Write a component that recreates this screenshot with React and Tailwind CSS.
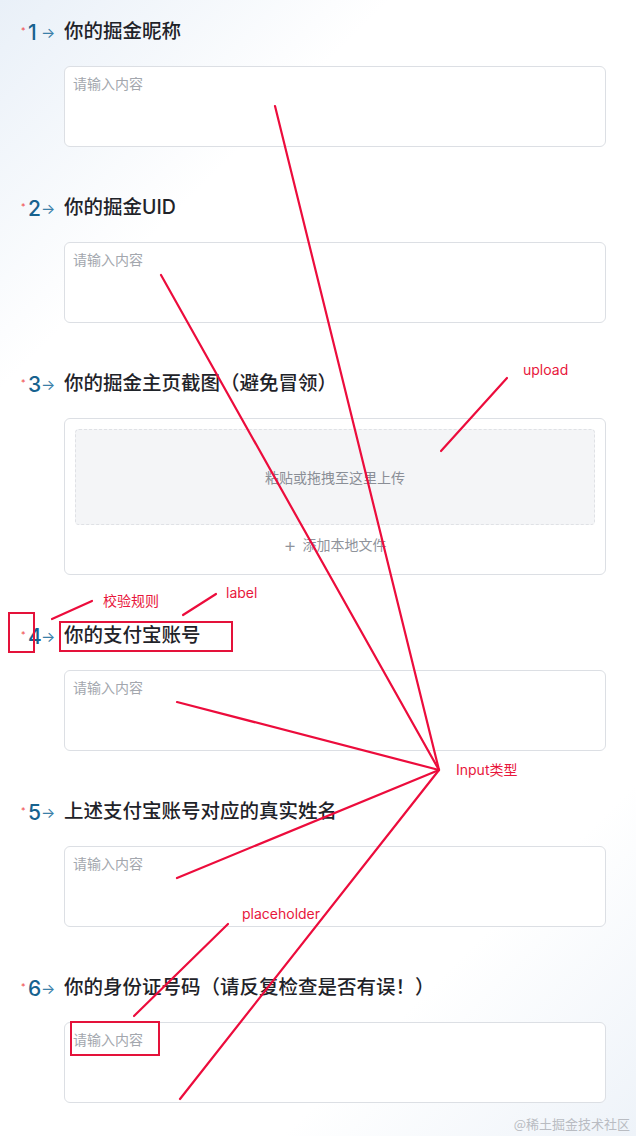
const FONT = "font-['Inter','Noto_Sans_CJK_SC',sans-serif]";

const questions = [
  { no: 1, label: "你的掘金昵称", type: "input" },
  { no: 2, label: "你的掘金UID", type: "input" },
  { no: 3, label: "你的掘金主页截图（避免冒领）", type: "upload" },
  { no: 4, label: "你的支付宝账号", type: "input" },
  { no: 5, label: "上述支付宝账号对应的真实姓名", type: "input" },
  { no: 6, label: "你的身份证号码（请反复检查是否有误！）", type: "input" },
];

function Question({ no, label, type }) {
  return (
    <div className="flex flex-col">
      {/* Label row */}
      <div className="flex items-center h-[28px] pl-[21px]">
        <span className="text-[#f04a4a] text-[9px] leading-none w-[7px] -mt-[3px]">*</span>
        <span className="text-[#17628f] text-[21px] font-medium leading-none w-[13px]">{no}</span>
        <span className="text-[#3a7fa8] text-[15px] leading-none w-[23px]">→</span>
        <span className="text-[#1f2329] text-[19.5px] font-medium leading-none">{label}</span>
      </div>

      {/* Field */}
      <div className="ml-[64px] mr-[30px] mt-[20px]">
        {type === "input" ? (
          <div className="h-[81px] border border-[#dcdfe4] rounded-[6px] bg-white px-[8px] pt-[4px]">
            <span className="text-[14px] text-[#a3a7ae]">请输入内容</span>
          </div>
        ) : (
          <div className="h-[157px] border border-[#dcdfe4] rounded-[6px] bg-white p-[10px] flex flex-col">
            <div className="h-[96px] rounded-[4px] border border-dashed border-[#dfe1e5] bg-[#f4f5f7] flex items-center justify-center">
              <span className="text-[14px] text-[#8a8e96]">粘贴或拖拽至这里上传</span>
            </div>
            <div className="flex-1 flex items-center justify-center gap-[6px] text-[14px] text-[#8f939b]">
              <span className="text-[20px] leading-none font-light">+</span>
              <span>添加本地文件</span>
            </div>
          </div>
        )}
      </div>
    </div>
  );
}

function Annotations() {
  const lines = [
    [275, 106, 439, 770],
    [161, 275, 439, 770],
    [177, 702, 439, 770],
    [177, 878, 439, 770],
    [180, 1099, 439, 770],
    [507, 378, 441, 451],
    [52, 619, 92, 601],
    [183, 615, 216, 594],
    [228, 924, 134, 1016],
  ];
  const rects = [
    [9, 613, 25, 39],
    [60, 622, 172, 29],
    [71, 1022, 88, 33],
  ];
  const notes = [
    { text: "upload", x: 523, y: 370 },
    { text: "校验规则", x: 103, y: 601 },
    { text: "label", x: 226, y: 593 },
    { text: "Input类型", x: 456, y: 770 },
    { text: "placeholder", x: 242, y: 914 },
  ];
  return (
    <>
      <svg className="absolute inset-0 pointer-events-none" width="636" height="1136">
        {lines.map(([x1, y1, x2, y2], i) => (
          <line key={i} x1={x1} y1={y1} x2={x2} y2={y2} stroke="#ec0c3c" strokeWidth="2.2" strokeLinecap="round" />
        ))}
        {rects.map(([x, y, w, h], i) => (
          <rect key={i} x={x} y={y} width={w} height={h} fill="none" stroke="#e4123a" strokeWidth="2" />
        ))}
      </svg>
      {notes.map((n) => (
        <span
          key={n.text}
          className="absolute text-[14px] leading-[16px] text-[#e8173c] whitespace-nowrap"
          style={{ left: n.x, top: n.y - 8 }}
        >
          {n.text}
        </span>
      ))}
    </>
  );
}

export default function App() {
  return (
    <div
      className={`relative w-[636px] h-[1136px] overflow-hidden bg-[linear-gradient(135deg,#e9f0f8_0%,#ffffff_22%,#ffffff_80%,#eef3f9_100%)] ${FONT}`}
    >
      <div className="flex flex-col gap-[47px] pt-[18px]">
        {questions.map((q) => (
          <Question key={q.no} {...q} />
        ))}
      </div>

      <Annotations />

      {/* Watermark */}
      <span className="absolute right-[6px] bottom-[3px] text-[13px] text-[#b9bcc2] font-['Noto_Sans_CJK_SC',serif]">
        @稀土掘金技术社区
      </span>
    </div>
  );
}
